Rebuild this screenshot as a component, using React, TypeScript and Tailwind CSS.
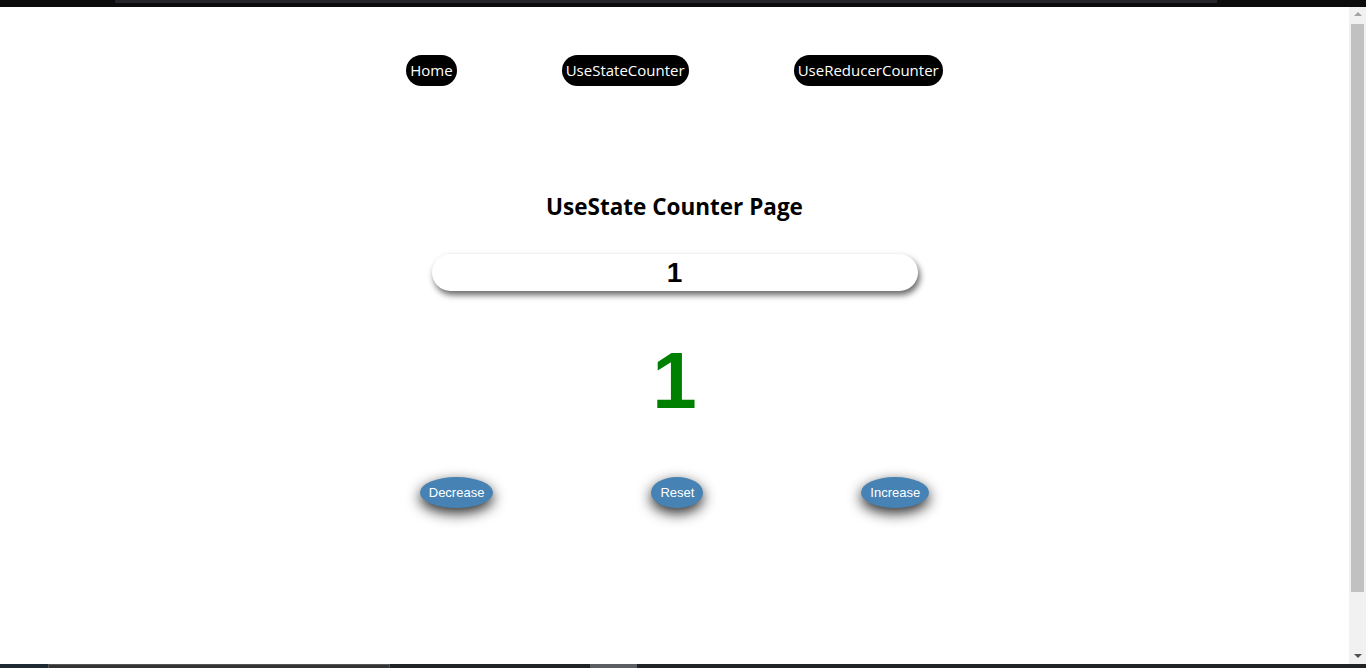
import React, { useState } from 'react';

const NAV = ['Home', 'UseStateCounter', 'UseReducerCounter'];

function NavLink({ label }: { label: string }) {
  return (
    <a className="flex h-[31px] items-center rounded-full bg-black px-[4px] text-[15px] leading-none text-white">
      {label}
    </a>
  );
}

function ActionButton({ label, onClick }: { label: string; onClick: () => void }) {
  return (
    <button
      onClick={onClick}
      className="h-[31px] rounded-[50%] bg-[#4682b4] px-[9px] text-[13px] text-white shadow-[0_5px_14px_rgba(0,0,0,0.85)]"
      style={{ fontFamily: '"Liberation Sans", Arial, sans-serif' }}
    >
      {label}
    </button>
  );
}

export default function App() {
  const [count, setCount] = useState(1);

  return (
    <div className="flex h-[668px] w-[1366px] flex-col overflow-hidden bg-white">
      {/* browser chrome strip */}
      <div className="flex h-[7px] bg-[#0c0c0c] pl-[115px] pr-[149px]">
        <div className="h-[3px] w-full bg-[#26262a]" />
      </div>

      <div className="flex flex-1">
        <main className="flex flex-1 flex-col items-center pt-[48px]" style={{ fontFamily: '"Open Sans", "Noto Sans", sans-serif' }}>
          <nav className="flex gap-[105px]">
            {NAV.map((n) => (
              <NavLink key={n} label={n} />
            ))}
          </nav>

          <h1 className="mt-[106px] text-[22.5px] font-bold leading-[30px] text-black">UseState Counter Page</h1>

          <input
            value={count}
            onChange={(e) => setCount(Number(e.target.value) || 0)}
            className="mt-[32px] h-[37px] w-[486px] rounded-full bg-white text-center text-[28px] font-bold text-black shadow-[2px_4px_6px_rgba(0,0,0,0.6)] outline-none"
            style={{ fontFamily: '"Liberation Sans", Arial, sans-serif' }}
          />

          <div
            className="mt-[40px] text-[80px] font-bold leading-[100px] text-[#008000]"
            style={{ fontFamily: '"Liberation Sans", Arial, sans-serif' }}
          >
            {count}
          </div>

          <div className="mt-[46px] flex gap-[158px]">
            <ActionButton label="Decrease" onClick={() => setCount((c) => c - 1)} />
            <ActionButton label="Reset" onClick={() => setCount(0)} />
            <ActionButton label="Increase" onClick={() => setCount((c) => c + 1)} />
          </div>
        </main>

        {/* scrollbar */}
        <div className="flex w-[17px] flex-col items-center bg-[#f1f1f1]">
          <div className="mt-[5px] h-0 w-0 border-x-[4px] border-b-[4px] border-x-transparent border-b-[#a3a3a3]" />
          <div className="mt-[8px] h-[568px] w-[13px] bg-[#c1c1c1]" />
          <div className="mt-auto mb-[6px] h-0 w-0 border-x-[4px] border-t-[4px] border-x-transparent border-t-[#505050]" />
        </div>
      </div>

      {/* taskbar strip */}
      <div className="flex h-[4px] bg-[#1f2326]">
        <div className="w-[48px] bg-[#1d2a33]" />
        <div className="w-[342px] border-x border-t border-[#555] bg-[#333]" />
        <div className="w-[200px]" />
        <div className="w-[47px] bg-[#5a5e62]" />
      </div>
    </div>
  );
}
